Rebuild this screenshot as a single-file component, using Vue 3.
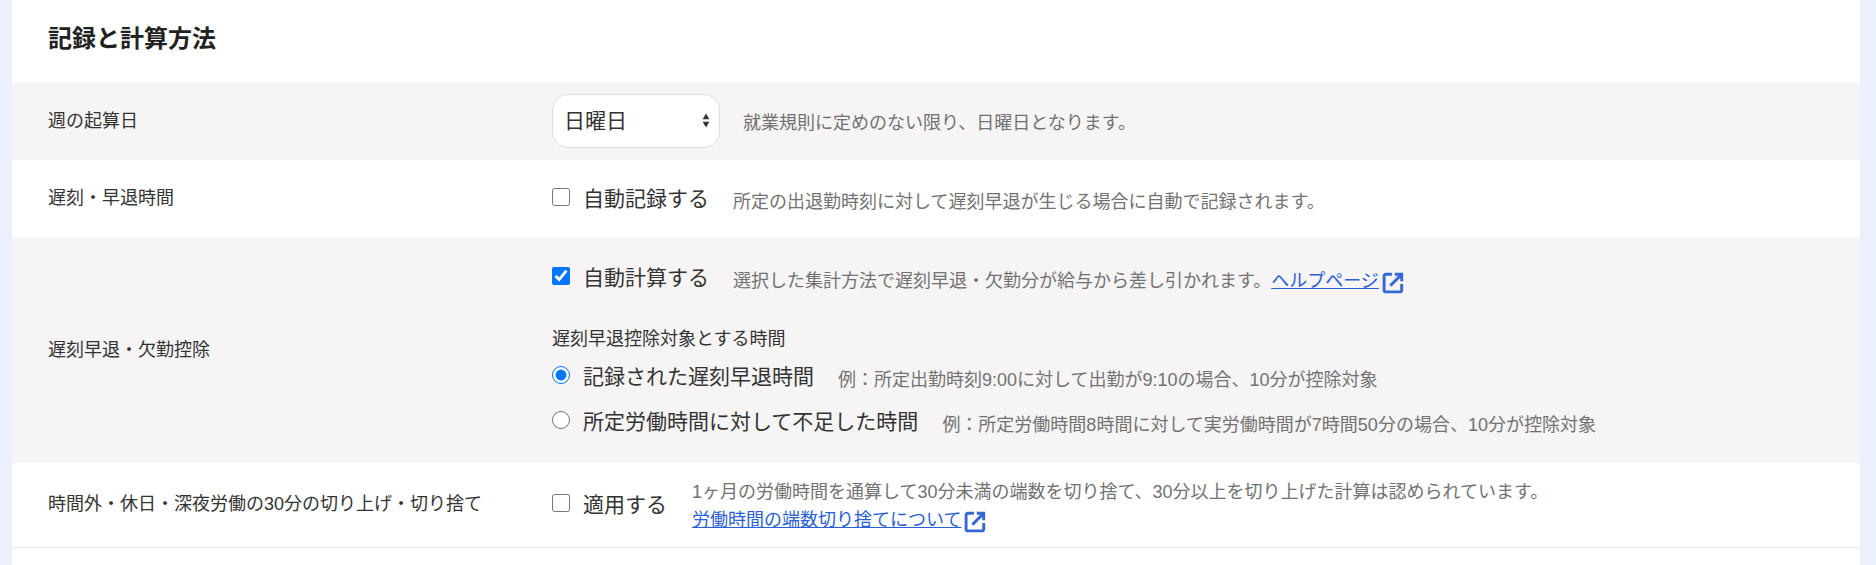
<script setup>
const weekdays = ['日曜日', '月曜日', '火曜日', '水曜日', '木曜日', '金曜日', '土曜日']
</script>

<template>
  <div class="page">
    <section class="card">
      <h2 class="title">記録と計算方法</h2>

      <div class="row shaded row-fixed">
        <div class="label first-label">週の起算日</div>
        <div class="line select-line">
          <div class="select-wrap">
            <select class="select">
              <option v-for="d in weekdays" :key="d">{{ d }}</option>
            </select>
            <svg class="carets" viewBox="0 0 8 16" aria-hidden="true">
              <path d="M4 0.5 L7.6 6.6 H0.4 Z M4 15.5 L7.6 9.4 H0.4 Z" fill="#333" />
            </svg>
          </div>
          <span class="help select-help">就業規則に定めのない限り、日曜日となります。</span>
        </div>
      </div>

      <div class="row row-fixed">
        <div class="label">遅刻・早退時間</div>
        <div class="line">
          <label class="choice">
            <input class="box" type="checkbox" />
            <span class="choice-text">自動記録する</span>
          </label>
          <span class="help">所定の出退勤時刻に対して遅刻早退が生じる場合に自動で記録されます。</span>
        </div>
      </div>

      <div class="row shaded row-deduct">
        <div class="label">遅刻早退・欠勤控除</div>
        <div class="stack">
          <div class="line">
            <label class="choice">
              <input class="box" type="checkbox" checked />
              <span class="choice-text">自動計算する</span>
            </label>
            <span class="help">選択した集計方法で遅刻早退・欠勤分が給与から差し引かれます。<a class="link" href="#">ヘルプページ</a><svg class="ext" viewBox="0 0 21 21" aria-hidden="true"><path d="M9.5 2.2 H3.6 A1.6 1.6 0 0 0 2 3.8 V17.4 A1.6 1.6 0 0 0 3.6 19 H17.2 A1.6 1.6 0 0 0 18.8 17.4 V11.5 M12.2 2.2 H18.8 V8.8 M18.4 2.6 L8 13" fill="none" stroke="#3568d4" stroke-width="2.8" /></svg></span>
          </div>
          <div class="subhead">遅刻早退控除対象とする時間</div>
          <div class="line radio-line first">
            <label class="choice">
              <input class="box" type="radio" name="deduct" checked />
              <span class="choice-text">記録された遅刻早退時間</span>
            </label>
            <span class="help">例：所定出勤時刻9:00に対して出勤が9:10の場合、10分が控除対象</span>
          </div>
          <div class="line radio-line">
            <label class="choice">
              <input class="box" type="radio" name="deduct" />
              <span class="choice-text">所定労働時間に対して不足した時間</span>
            </label>
            <span class="help">例：所定労働時間8時間に対して実労働時間が7時間50分の場合、10分が控除対象</span>
          </div>
        </div>
      </div>

      <div class="row row-round">
        <div class="label">時間外・休日・深夜労働の30分の切り上げ・切り捨て</div>
        <div class="line round-line">
          <label class="choice">
            <input class="box" type="checkbox" />
            <span class="choice-text">適用する</span>
          </label>
          <div class="help round-help">
            <div>1ヶ月の労働時間を通算して30分未満の端数を切り捨て、30分以上を切り上げた計算は認められています。</div>
            <div class="round-link"><a class="link" href="#">労働時間の端数切り捨てについて</a><svg class="ext" viewBox="0 0 21 21" aria-hidden="true"><path d="M9.5 2.2 H3.6 A1.6 1.6 0 0 0 2 3.8 V17.4 A1.6 1.6 0 0 0 3.6 19 H17.2 A1.6 1.6 0 0 0 18.8 17.4 V11.5 M12.2 2.2 H18.8 V8.8 M18.4 2.6 L8 13" fill="none" stroke="#3568d4" stroke-width="2.8" /></svg></div>
          </div>
        </div>
      </div>
    </section>
  </div>
</template>

<style>
html, body { margin: 0; }
</style>

<style scoped>
.page {
  box-sizing: border-box;
  height: 565px;
  overflow: hidden;
  padding: 0 16px 0 12px;
  background: #eaf1fe;
  font-family: "Liberation Sans", "Noto Sans CJK JP", sans-serif;
  color: #333;
}
.card { background: #fff; height: 100%; }
.title {
  margin: 0;
  height: 82px;
  box-sizing: border-box;
  padding: 21px 0 0 36px;
  font-size: 24px;
  line-height: 36px;
  font-weight: 700;
  color: #222;
}
.row {
  display: grid;
  grid-template-columns: 504px 1fr;
  align-items: center;
  padding-left: 36px;
}
.shaded { background: #f6f4f5; }
.row-fixed { height: 78px; }
.row-deduct { height: 225px; }
.row-round { height: 85px; box-sizing: border-box; border-bottom: 1px solid #e5e5e5; }
.label { font-size: 18px; line-height: 26px; color: #333; margin-top: -2px; }
.first-label { margin-top: 0; }
.line { display: flex; align-items: baseline; }
.choice { display: inline-flex; align-items: center; }
.box { width: 18px; height: 18px; margin: 0 13px 0 0; flex: none; position: relative; top: -2px; }
.choice-text { font-size: 21px; line-height: 30px; color: #333; }
.help { font-size: 18px; line-height: 26px; color: #727272; margin-left: 24px; }
.select-line { align-items: center; }
.select-help { margin-left: 23px; position: relative; top: 2px; }
.select-wrap { position: relative; width: 168px; height: 54px; }
.select {
  appearance: none;
  width: 100%;
  height: 100%;
  box-sizing: border-box;
  padding: 0 11px 2px;
  border: 1px solid #e0dfe0;
  border-radius: 16px;
  background: #fff;
  font: inherit;
  font-size: 21px;
  color: #333;
}
.carets { position: absolute; right: 10px; top: 19px; width: 8px; height: 15px; }
.stack { display: flex; flex-direction: column; margin-top: -1px; }
.subhead { font-size: 18px; line-height: 26px; color: #333; margin-top: 32px; }
.radio-line.first { margin-top: 10px; }
.radio-line + .radio-line { margin-top: 14px; }
.link { color: #2a5fd4; text-decoration: underline; }
.ext { width: 22px; height: 22px; vertical-align: -7px; margin-left: 3px; }
.round-line { align-items: center; }
.round-help { margin-left: 25px; margin-top: 2px; }
.round-link { margin-top: 2px; }
</style>
